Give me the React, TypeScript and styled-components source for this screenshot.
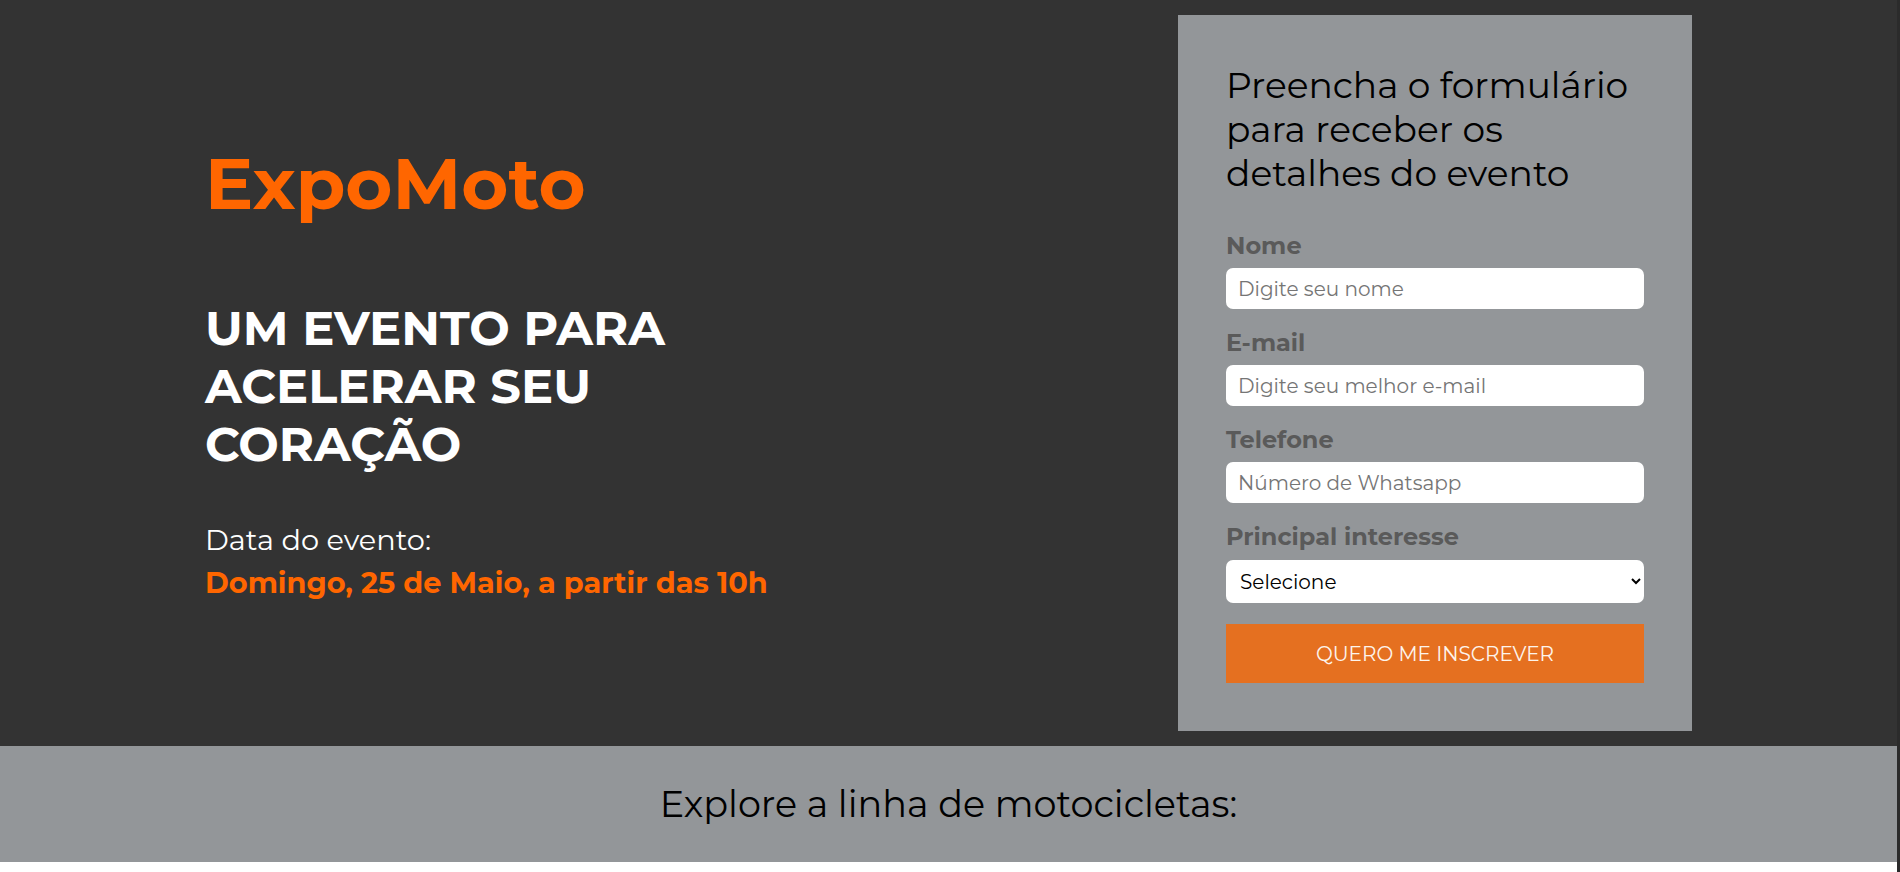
import React from "react";
import styled, { createGlobalStyle } from "styled-components";

const GlobalStyle = createGlobalStyle`
  * {
    box-sizing: border-box;
  }

  body {
    margin: 0;
    min-height: 100vh;
    background: #ffffff;
    border-right: 3px solid #2b2b2b;
    font-family: Montserrat, Inter, "Noto Sans", sans-serif;
  }
`;

const App: React.FC = () => {
  return (
    <>
      <GlobalStyle />
      <Hero>
        <Intro>
          <Brand>ExpoMoto</Brand>
          <Headline>
            UM EVENTO PARA
            <br />
            ACELERAR SEU
            <br />
            CORAÇÃO
          </Headline>
          <DateLabel>Data do evento:</DateLabel>
          <DateValue>Domingo, 25 de Maio, a partir das 10h</DateValue>
        </Intro>

        <FormPanel>
          <FormTitle>Preencha o formulário para receber os detalhes do evento</FormTitle>
          <Field>
            <Label htmlFor="nome">Nome</Label>
            <Input id="nome" type="text" placeholder="Digite seu nome" />
          </Field>
          <Field>
            <Label htmlFor="email">E-mail</Label>
            <Input id="email" type="email" placeholder="Digite seu melhor e-mail" />
          </Field>
          <Field>
            <Label htmlFor="telefone">Telefone</Label>
            <Input id="telefone" type="tel" placeholder="Número de Whatsapp" />
          </Field>
          <Field $last>
            <Label htmlFor="interesse" $gap={9}>
              Principal interesse
            </Label>
            <Select id="interesse" defaultValue="">
              <option value="">Selecione</option>
              <option value="street">Street</option>
              <option value="trail">Trail</option>
              <option value="esportiva">Esportiva</option>
            </Select>
          </Field>
          <SubmitButton type="button">QUERO ME INSCREVER</SubmitButton>
        </FormPanel>
      </Hero>

      <Explore>
        <ExploreTitle>Explore a linha de motocicletas:</ExploreTitle>
      </Explore>
    </>
  );
};

export default App;

const Hero = styled.section`
  display: flex;
  justify-content: space-between;
  align-items: flex-start;
  background-color: #333333;
  padding: 15px 205px;
`;

const Intro = styled.div`
  display: flex;
  flex-direction: column;
  padding-top: 124px;
  color: #ffffff;
`;

const Brand = styled.h1`
  margin: 0 0 72px;
  font-size: 72px;
  line-height: 88px;
  font-weight: 700;
  color: #ff6600;
`;

const Headline = styled.h2`
  margin: 0 0 49px;
  font-size: 48px;
  line-height: 58px;
  font-weight: 700;
`;

const DateLabel = styled.p`
  margin: 0 0 8px;
  font-size: 28.8px;
  line-height: 35px;
  font-weight: 400;
`;

const DateValue = styled.p`
  margin: 0;
  font-size: 28.8px;
  line-height: 35px;
  font-weight: 700;
  color: #ff6600;
`;

const FormPanel = styled.form`
  flex-shrink: 0;
  width: 514px;
  padding: 48px;
  background-color: #939699;
`;

const FormTitle = styled.h3`
  margin: 0 0 36px;
  font-size: 36px;
  line-height: 44px;
  font-weight: 400;
  color: #000000;
`;

const Field = styled.div<{ $last?: boolean }>`
  display: flex;
  flex-direction: column;
  margin-bottom: ${({ $last }) => ($last ? "21px" : "19px")};
`;

const Label = styled.label<{ $gap?: number }>`
  margin-bottom: ${({ $gap }) => $gap ?? 8}px;
  font-size: 24px;
  line-height: 29px;
  font-weight: 700;
  color: #5a5a5a;
`;

const Input = styled.input`
  height: 41px;
  width: 100%;
  padding: 0 12px;
  border: none;
  border-radius: 7px;
  background: #ffffff;
  font-family: inherit;
  font-size: 20px;
  color: #333333;
  outline: none;

  &::placeholder {
    color: #757575;
  }
`;

const Select = styled.select`
  height: 43px;
  width: 100%;
  padding: 0 10px;
  border: none;
  border-radius: 7px;
  background: #ffffff;
  font-family: inherit;
  font-size: 20px;
  color: #000000;
  outline: none;
`;

const SubmitButton = styled.button`
  display: block;
  width: 100%;
  height: 59px;
  border: none;
  background-color: #e57020;
  font-family: inherit;
  font-size: 20px;
  font-weight: 400;
  color: #fdf4ec;
  cursor: pointer;
`;

const Explore = styled.section`
  background-color: #939699;
  padding: 36px 0;
  text-align: center;
`;

const ExploreTitle = styled.h2`
  margin: 0;
  font-size: 36.6px;
  line-height: 44px;
  font-weight: 400;
  color: #000000;
`;
